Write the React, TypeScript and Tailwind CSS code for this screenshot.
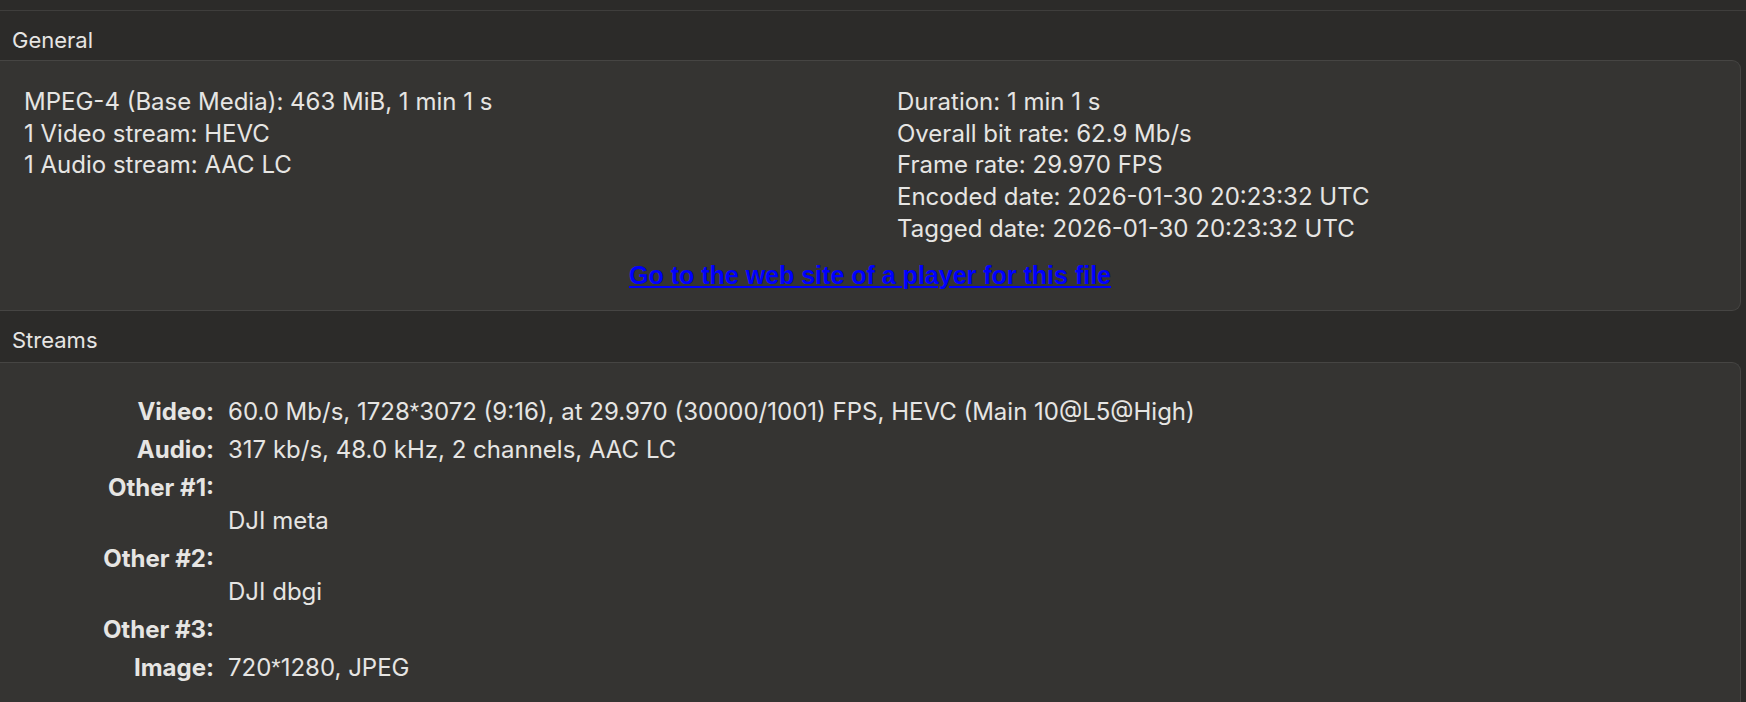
import React from 'react';

const generalLeft = [
  'MPEG-4 (Base Media): 463 MiB, 1 min 1 s',
  '1 Video stream: HEVC',
  '1 Audio stream: AAC LC',
];

const generalRight = [
  'Duration: 1 min 1 s',
  'Overall bit rate: 62.9 Mb/s',
  'Frame rate: 29.970 FPS',
  'Encoded date: 2026-01-30 20:23:32 UTC',
  'Tagged date: 2026-01-30 20:23:32 UTC',
];

const streams: { label: string; value: string; below?: boolean }[] = [
  { label: 'Video:', value: '60.0 Mb/s, 1728*3072 (9:16), at 29.970 (30000/1001) FPS, HEVC (Main 10@L5@High)' },
  { label: 'Audio:', value: '317 kb/s, 48.0 kHz, 2 channels, AAC LC' },
  { label: 'Other #1:', value: 'DJI meta', below: true },
  { label: 'Other #2:', value: 'DJI dbgi', below: true },
  { label: 'Other #3:', value: '' },
  { label: 'Image:', value: '720*1280, JPEG' },
];

// Inter draws "*" centred; the original has a raised asterisk
function Value({ text }: { text: string }) {
  const parts = text.split('*');
  return (
    <>
      {parts.map((p, i) => (
        <React.Fragment key={i}>
          {i > 0 && <span style={{ fontFamily: '"Liberation Sans", sans-serif' }}>*</span>}
          {p}
        </React.Fragment>
      ))}
    </>
  );
}

function SectionTitle({ title, h }: { title: string; h: string }) {
  return <div className={`${h} pl-[12px] pt-[17px] text-[22px] leading-[24px]`}>{title}</div>;
}

export default function App() {
  return (
    <div
      className="min-h-screen bg-[#2c2b29] text-[#e6e5e3]"
      style={{ fontFamily: 'Inter, "Noto Sans", sans-serif' }}
    >
      <div className="h-[11px] border-b border-[#3f3e3c]" />

      <SectionTitle title="General" h="h-[49px]" />
      <div className="mr-[5px] rounded-r-[9px] border-y border-r border-[#464543] bg-[#353432] pt-[25px] pb-[20px]">
        <div className="grid grid-cols-[873px_1fr] pl-[24px] text-[24px] leading-[31.7px]">
          <div>
            {generalLeft.map((line) => (
              <div key={line}>{line}</div>
            ))}
          </div>
          <div>
            {generalRight.map((line) => (
              <div key={line}>{line}</div>
            ))}
          </div>
        </div>
        <div className="mt-[16px] text-center">
          <a
            href="#"
            className="text-[25px] font-bold leading-[28px] text-[#0000ff] underline"
            style={{ fontFamily: '"Liberation Sans", Arial, sans-serif' }}
          >
            Go to the web site of a player for this file
          </a>
        </div>
      </div>

      <SectionTitle title="Streams" h="h-[51px]" />
      <div className="mr-[5px] rounded-tr-[9px] border-t border-r border-[#464543] bg-[#353432] pt-[32px] pb-[40px]">
        <div className="grid grid-cols-[214px_1fr] gap-x-[14px] gap-y-[5px] text-[24px] leading-[33px]">
          {streams.map((s) => (
            <React.Fragment key={s.label}>
              <div className="text-right font-bold">{s.label}</div>
              <div>
                {s.below ? (
                  <>
                    <div>&nbsp;</div>
                    <div>{s.value}</div>
                  </>
                ) : (
                  <Value text={s.value} />
                )}
              </div>
            </React.Fragment>
          ))}
        </div>
      </div>
    </div>
  );
}
